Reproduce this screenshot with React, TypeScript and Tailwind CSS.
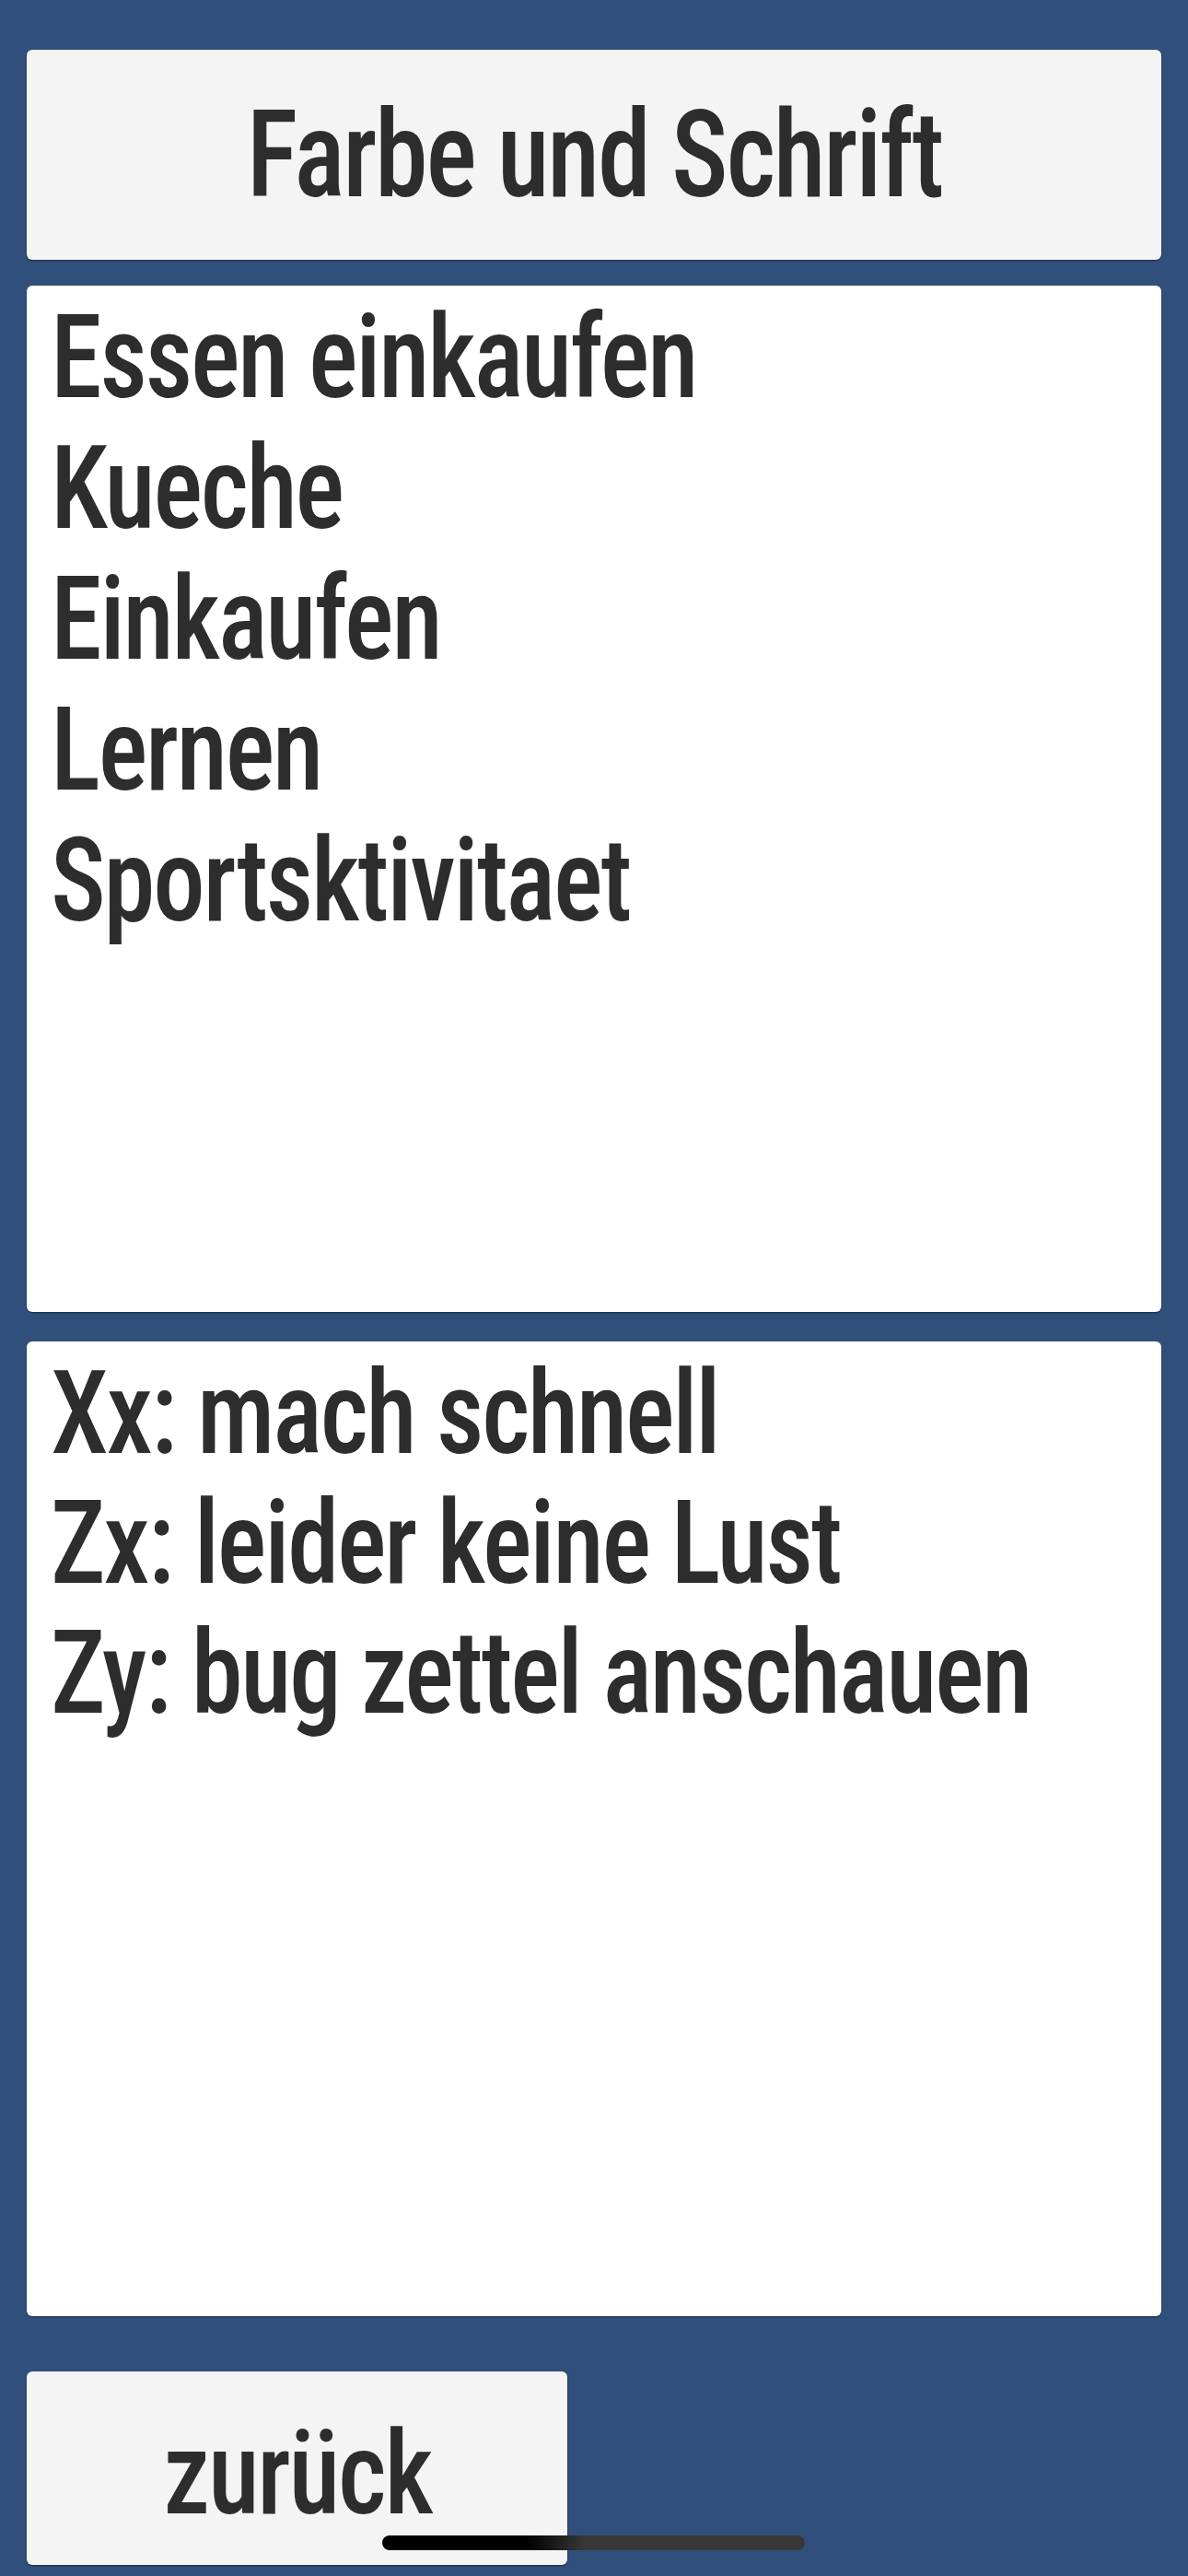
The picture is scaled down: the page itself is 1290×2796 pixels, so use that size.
import React from 'react';

const FONT = 'font-["Roboto_Condensed","Liberation_Sans_Narrow",sans-serif]';

const categories = ['Essen einkaufen', 'Kueche', 'Einkaufen', 'Lernen', 'Sportsktivitaet'];
const notes = ['Xx: mach schnell', 'Zx: leider keine Lust', 'Zy: bug zettel anschauen'];

export default function App() {
  return (
    <div className={`relative min-h-[2796px] bg-[#314f7b] px-[29px] pt-[54px] text-[#2d2d2d] ${FONT}`}>
      <button className="flex h-[228px] w-full items-center justify-center rounded-[6px] bg-[#f4f4f4] shadow-[0_1px_2px_rgba(0,0,0,0.45)]">
        <span className="inline-block scale-x-[0.89] text-[131px] font-medium leading-none tracking-[-0.02em]">Farbe und Schrift</span>
      </button>

      <div className="mt-[28px] flex h-[1114px] flex-col rounded-[6px] bg-white pl-[26px] pt-[7px] shadow-[0_1px_2px_rgba(0,0,0,0.45)]">
        {categories.map(c => (
          <div key={c} className="origin-left scale-x-[0.89] text-[127px] font-medium leading-[142px] tracking-[-0.02em]">{c}</div>
        ))}
      </div>

      <div className="mt-[32px] flex h-[1058px] flex-col rounded-[6px] bg-white pl-[26px] pt-[7px] shadow-[0_1px_2px_rgba(0,0,0,0.45)]">
        {notes.map(n => (
          <div key={n} className="origin-left scale-x-[0.89] text-[127px] font-medium leading-[141px] tracking-[-0.02em]">{n}</div>
        ))}
      </div>

      <button className="mt-[60px] flex h-[210px] w-[587px] items-center justify-center rounded-[6px] bg-[#f4f4f4] pt-[10px] shadow-[0_1px_2px_rgba(0,0,0,0.45)]">
        <span className="inline-block scale-x-[0.9] text-[127px] font-medium leading-none tracking-[-0.02em]">zurück</span>
      </button>

      {/* home indicator */}
      <div className="absolute left-[415px] top-[2752px] h-[16px] w-[459px] rounded-full bg-[linear-gradient(90deg,#000_0%,#000_34%,#383838_48%,#383838_100%)]" />
    </div>
  );
}
